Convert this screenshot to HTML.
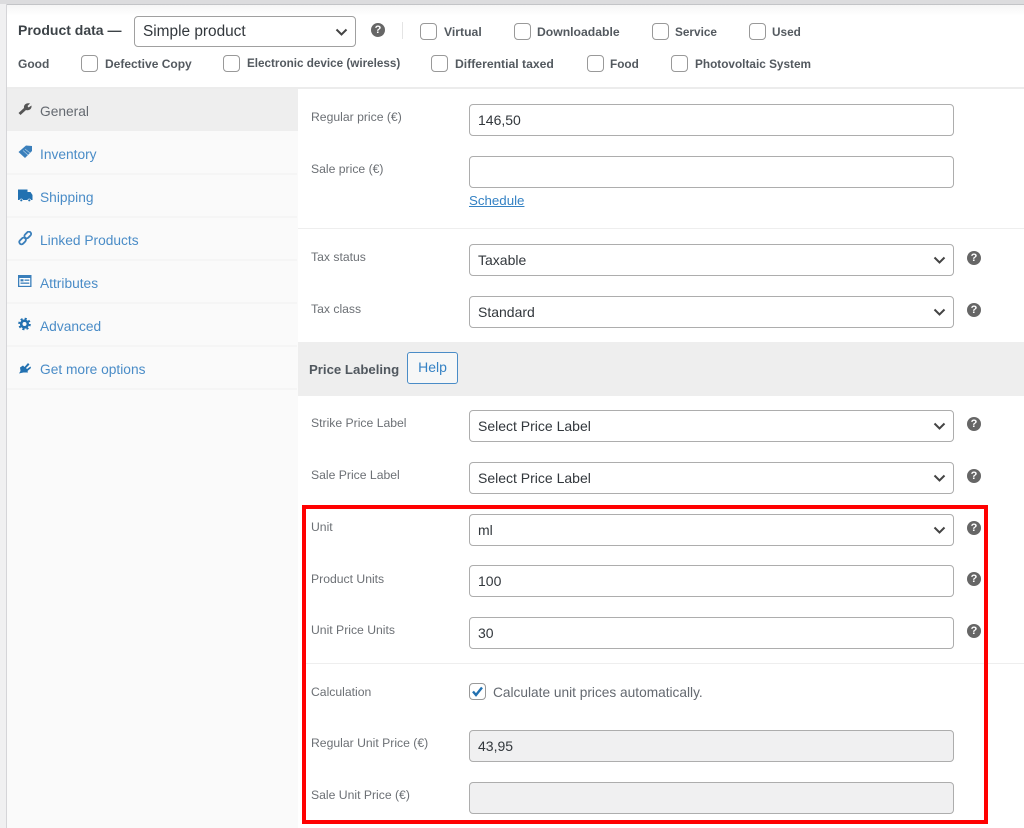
<!DOCTYPE html>
<html><head><meta charset="utf-8"><style>
html,body{margin:0;padding:0;background:#fff}
#p{position:relative;width:1024px;height:828px;overflow:hidden;background:#fff;font-family:"Liberation Sans",sans-serif;color:#3c434a}
#p>*{position:absolute;box-sizing:border-box}
.t{white-space:nowrap;line-height:18px}
.cb{width:17px;height:17px;border:1px solid #999;border-radius:4px;background:#fff}
.ck{font-size:11.8px;font-weight:bold;color:#3c434a;opacity:.88}
.l{font-size:12.2px;color:#6c7075;left:311px}
.f{left:469px;width:485px;height:31.5px;border:1px solid #adadad;border-radius:4px;background:#fff;font-size:14px;line-height:30px;padding-left:8px;color:#32373c}
.d{background:#f0f0f1}
.s svg{position:absolute;right:7px;top:11px}
.h{width:14px;height:14px;border-radius:50%;background:#666;color:#fff;font:bold 11px/14px "Liberation Sans",sans-serif;text-align:center;left:967px}
.n{left:40px;font-size:13.75px;color:#4a8cc7}
.sep{left:7px;width:290px;height:2px;background:#f5f5f5}
.i{left:18px;width:15px;height:15px}
</style></head><body><div id="p">
<div style="left:0;top:0;width:1024px;height:4px;background:#dcdcde"></div>
<div style="left:0;top:4px;width:1024px;height:1px;background:#c3c4c7"></div>
<div style="left:7px;top:5px;width:1017px;height:11px;background:linear-gradient(#f6f6f6,#fff)"></div>
<div style="left:0;top:4px;width:6px;height:824px;background:#f0f0f1"></div>
<div style="left:6px;top:4px;width:1px;height:824px;background:#d5d5d8"></div>
<div style="left:7px;top:87px;width:1017px;height:2px;background:#ececec"></div>

<div class="t" style="left:18px;top:21px;font-size:14px;font-weight:bold;color:#2c3338;opacity:.92">Product data —</div>
<div class="f s" style="left:134px;top:16px;width:222px;height:31px;border-color:#a0a0a0;line-height:30px;font-size:15.4px">Simple product<svg width="13" height="8" viewBox="0 0 13 8"><path d="M1.500 1.500L6.500 6.500L11.500 1.500" fill="none" stroke="#444" stroke-width="2"/></svg></div>
<div class="h" style="left:371px;top:23px">?</div>
<div style="left:402px;top:22px;width:1px;height:17px;background:#e4e4e4"></div>

<div class="cb" style="left:420px;top:23px"></div><div class="t ck" style="left:444px;top:23px;font-size:12.2px">Virtual</div>
<div class="cb" style="left:514px;top:23px"></div><div class="t ck" style="left:537px;top:23px;font-size:12.2px">Downloadable</div>
<div class="cb" style="left:652px;top:23px"></div><div class="t ck" style="left:675px;top:23px">Service</div>
<div class="cb" style="left:749px;top:23px"></div><div class="t ck" style="left:772px;top:23px">Used</div>
<div class="t ck" style="left:18px;top:55px;font-size:12px">Good</div>
<div class="cb" style="left:81px;top:55px"></div><div class="t ck" style="left:105px;top:55px;font-size:12px">Defective Copy</div>
<div class="cb" style="left:223px;top:55px"></div><div class="t ck" style="left:247px;top:55px;font-size:11.7px">Electronic device (wireless)</div>
<div class="cb" style="left:431px;top:55px"></div><div class="t ck" style="left:455px;top:55px;font-size:12.2px">Differential taxed</div>
<div class="cb" style="left:587px;top:55px"></div><div class="t ck" style="left:610px;top:55px">Food</div>
<div class="cb" style="left:671px;top:55px"></div><div class="t ck" style="left:695px;top:55px">Photovoltaic System</div>

<div style="left:7px;top:89px;width:291px;height:739px;background:#fafafa"></div>
<div style="left:7px;top:89px;width:291px;height:42px;background:#eee"></div>
<div class="sep" style="top:173px"></div><div class="sep" style="top:216px"></div><div class="sep" style="top:259px"></div><div class="sep" style="top:302px"></div><div class="sep" style="top:345px"></div><div class="sep" style="top:388px"></div>

<svg class="i" style="top:101px" viewBox="0 0 15 15"><path d="M0.500 12L6 7C5.500 4 8 1.500 12 2.500L9.500 5L10.500 6.500L13.500 4.500C14 8 11 10 8 9L2.500 14Z" fill="#555"/></svg>
<svg class="i" style="top:144px" viewBox="0 0 15 15"><path d="M0.500 8L8 1.500L14 2L14 7L7 14Z" fill="#3a7fbb"/><path d="M5 6.500L10 11M7 5L12 9" stroke="#a9cbe6" stroke-width=".8"/></svg>
<svg class="i" style="top:188px;left:17px;width:16px" viewBox="0 0 16 15"><path d="M1 1.500H10.500V4H13.500L15.500 7V12H14A1.800 1.800 0 0 0 10.500 12H6A1.800 1.800 0 0 0 2.500 12H1Z" fill="#2271b1"/><circle cx="4.300" cy="12.300" r="1.100" fill="#2271b1"/><circle cx="12.300" cy="12.300" r="1.100" fill="#2271b1"/></svg>
<svg class="i" style="top:231px" viewBox="0 0 15 15"><g fill="none" stroke="#3a7fbb" stroke-width="1.800"><rect x="6" y="1.800" width="7.500" height="4.500" rx="2.200" transform="rotate(-45 9.700 4)"/><rect x="0.800" y="7.800" width="7.500" height="4.500" rx="2.200" transform="rotate(-45 4.500 10)"/></g></svg>
<svg class="i" style="top:274px" viewBox="0 0 15 15"><rect x="0" y="1" width="13.500" height="12" fill="#3a7fbb"/><rect x="1.300" y="4" width="10.900" height="7.800" fill="#fff"/><rect x="2.500" y="5.200" width="3" height="2.200" fill="#3a7fbb"/><rect x="6.500" y="5.500" width="4.800" height="1.300" fill="#3a7fbb"/><rect x="2.500" y="8.500" width="8.800" height="1.300" fill="#3a7fbb"/></svg>
<svg class="i" style="top:316px" viewBox="0 0 15 15"><circle cx="6.500" cy="8" r="3.300" fill="none" stroke="#2271b1" stroke-width="2.600"/><circle cx="6.500" cy="8" r="5.300" fill="none" stroke="#2271b1" stroke-width="2" stroke-dasharray="2.100 2.060"/></svg>
<svg class="i" style="top:361px" viewBox="0 0 15 15"><path d="M1 12.500L2.500 10L2 6.500L5 4.500L6.500 6L10 2L11.500 3.500L8 7L9 8L12.500 5.500L13 7L9.500 10L10 11.500H5.500L3 12Z" fill="#2271b1"/></svg>

<div class="t n" style="top:103px;color:#646970">General</div>
<div class="t n" style="top:146px">Inventory</div>
<div class="t n" style="top:189px">Shipping</div>
<div class="t n" style="top:232px">Linked Products</div>
<div class="t n" style="top:275px">Attributes</div>
<div class="t n" style="top:318px">Advanced</div>
<div class="t n" style="top:361px">Get more options</div>

<div class="t l" style="top:108px">Regular price (€)</div>
<div class="f" style="top:104px">146,50</div>
<div class="t l" style="top:160px">Sale price (€)</div>
<div class="f" style="top:156px"></div>
<div class="t" style="left:469px;top:192px;font-size:13.3px;color:#3582c4;text-decoration:underline">Schedule</div>
<div style="left:298px;top:228px;width:726px;height:1px;background:#eee"></div>

<div class="t l" style="top:248px">Tax status</div>
<div class="f s" style="top:244px">Taxable<svg width="13" height="8" viewBox="0 0 13 8"><path d="M1.500 1.500L6.500 6.500L11.500 1.500" fill="none" stroke="#444" stroke-width="2"/></svg></div><div class="h" style="top:251px">?</div>
<div class="t l" style="top:300px">Tax class</div>
<div class="f s" style="top:296px">Standard<svg width="13" height="8" viewBox="0 0 13 8"><path d="M1.500 1.500L6.500 6.500L11.500 1.500" fill="none" stroke="#444" stroke-width="2"/></svg></div><div class="h" style="top:303px">?</div>

<div style="left:298px;top:342px;width:726px;height:54px;background:#eee"></div>
<div class="t" style="left:309px;top:361px;font-size:13.2px;font-weight:bold;color:#50575e">Price Labeling</div>
<div style="left:407px;top:352px;width:51px;height:32px;border:1px solid #4a8cc7;border-radius:3px;background:#f6f7f7;color:#3582c4;font-size:14px;line-height:29px;text-align:center">Help</div>

<div class="t l" style="top:414px">Strike Price Label</div>
<div class="f s" style="top:410px">Select Price Label<svg width="13" height="8" viewBox="0 0 13 8"><path d="M1.500 1.500L6.500 6.500L11.500 1.500" fill="none" stroke="#444" stroke-width="2"/></svg></div><div class="h" style="top:417px">?</div>
<div class="t l" style="top:466px">Sale Price Label</div>
<div class="f s" style="top:462px">Select Price Label<svg width="13" height="8" viewBox="0 0 13 8"><path d="M1.500 1.500L6.500 6.500L11.500 1.500" fill="none" stroke="#444" stroke-width="2"/></svg></div><div class="h" style="top:469px">?</div>

<div class="t l" style="top:518px">Unit</div>
<div class="f s" style="top:514px">ml<svg width="13" height="8" viewBox="0 0 13 8"><path d="M1.500 1.500L6.500 6.500L11.500 1.500" fill="none" stroke="#444" stroke-width="2"/></svg></div><div class="h" style="top:521px">?</div>
<div class="t l" style="top:570px">Product Units</div>
<div class="f" style="top:565px">100</div><div class="h" style="top:572px">?</div>
<div class="t l" style="top:621px">Unit Price Units</div>
<div class="f" style="top:617px">30</div><div class="h" style="top:624px">?</div>
<div style="left:304px;top:663px;width:720px;height:1px;background:#eee"></div>

<div class="t l" style="top:683px">Calculation</div>
<div class="cb" style="left:469px;top:683px;background:#fff"><svg width="15" height="15" viewBox="0 0 15 15" style="display:block"><path d="M3 7.500L6 11L12 3.500" fill="none" stroke="#2271b1" stroke-width="2.400"/></svg></div>
<div class="t" style="left:493px;top:684px;font-size:13.7px;color:#646970">Calculate unit prices automatically.</div>
<div class="t l" style="top:734px">Regular Unit Price (€)</div>
<div class="f d" style="top:730px">43,95</div>
<div class="t l" style="top:786px">Sale Unit Price (€)</div>
<div class="f d" style="top:782px"></div>

<div style="left:302px;top:505px;width:686px;height:319px;border:4px solid #f00"></div>
</div></body></html>
